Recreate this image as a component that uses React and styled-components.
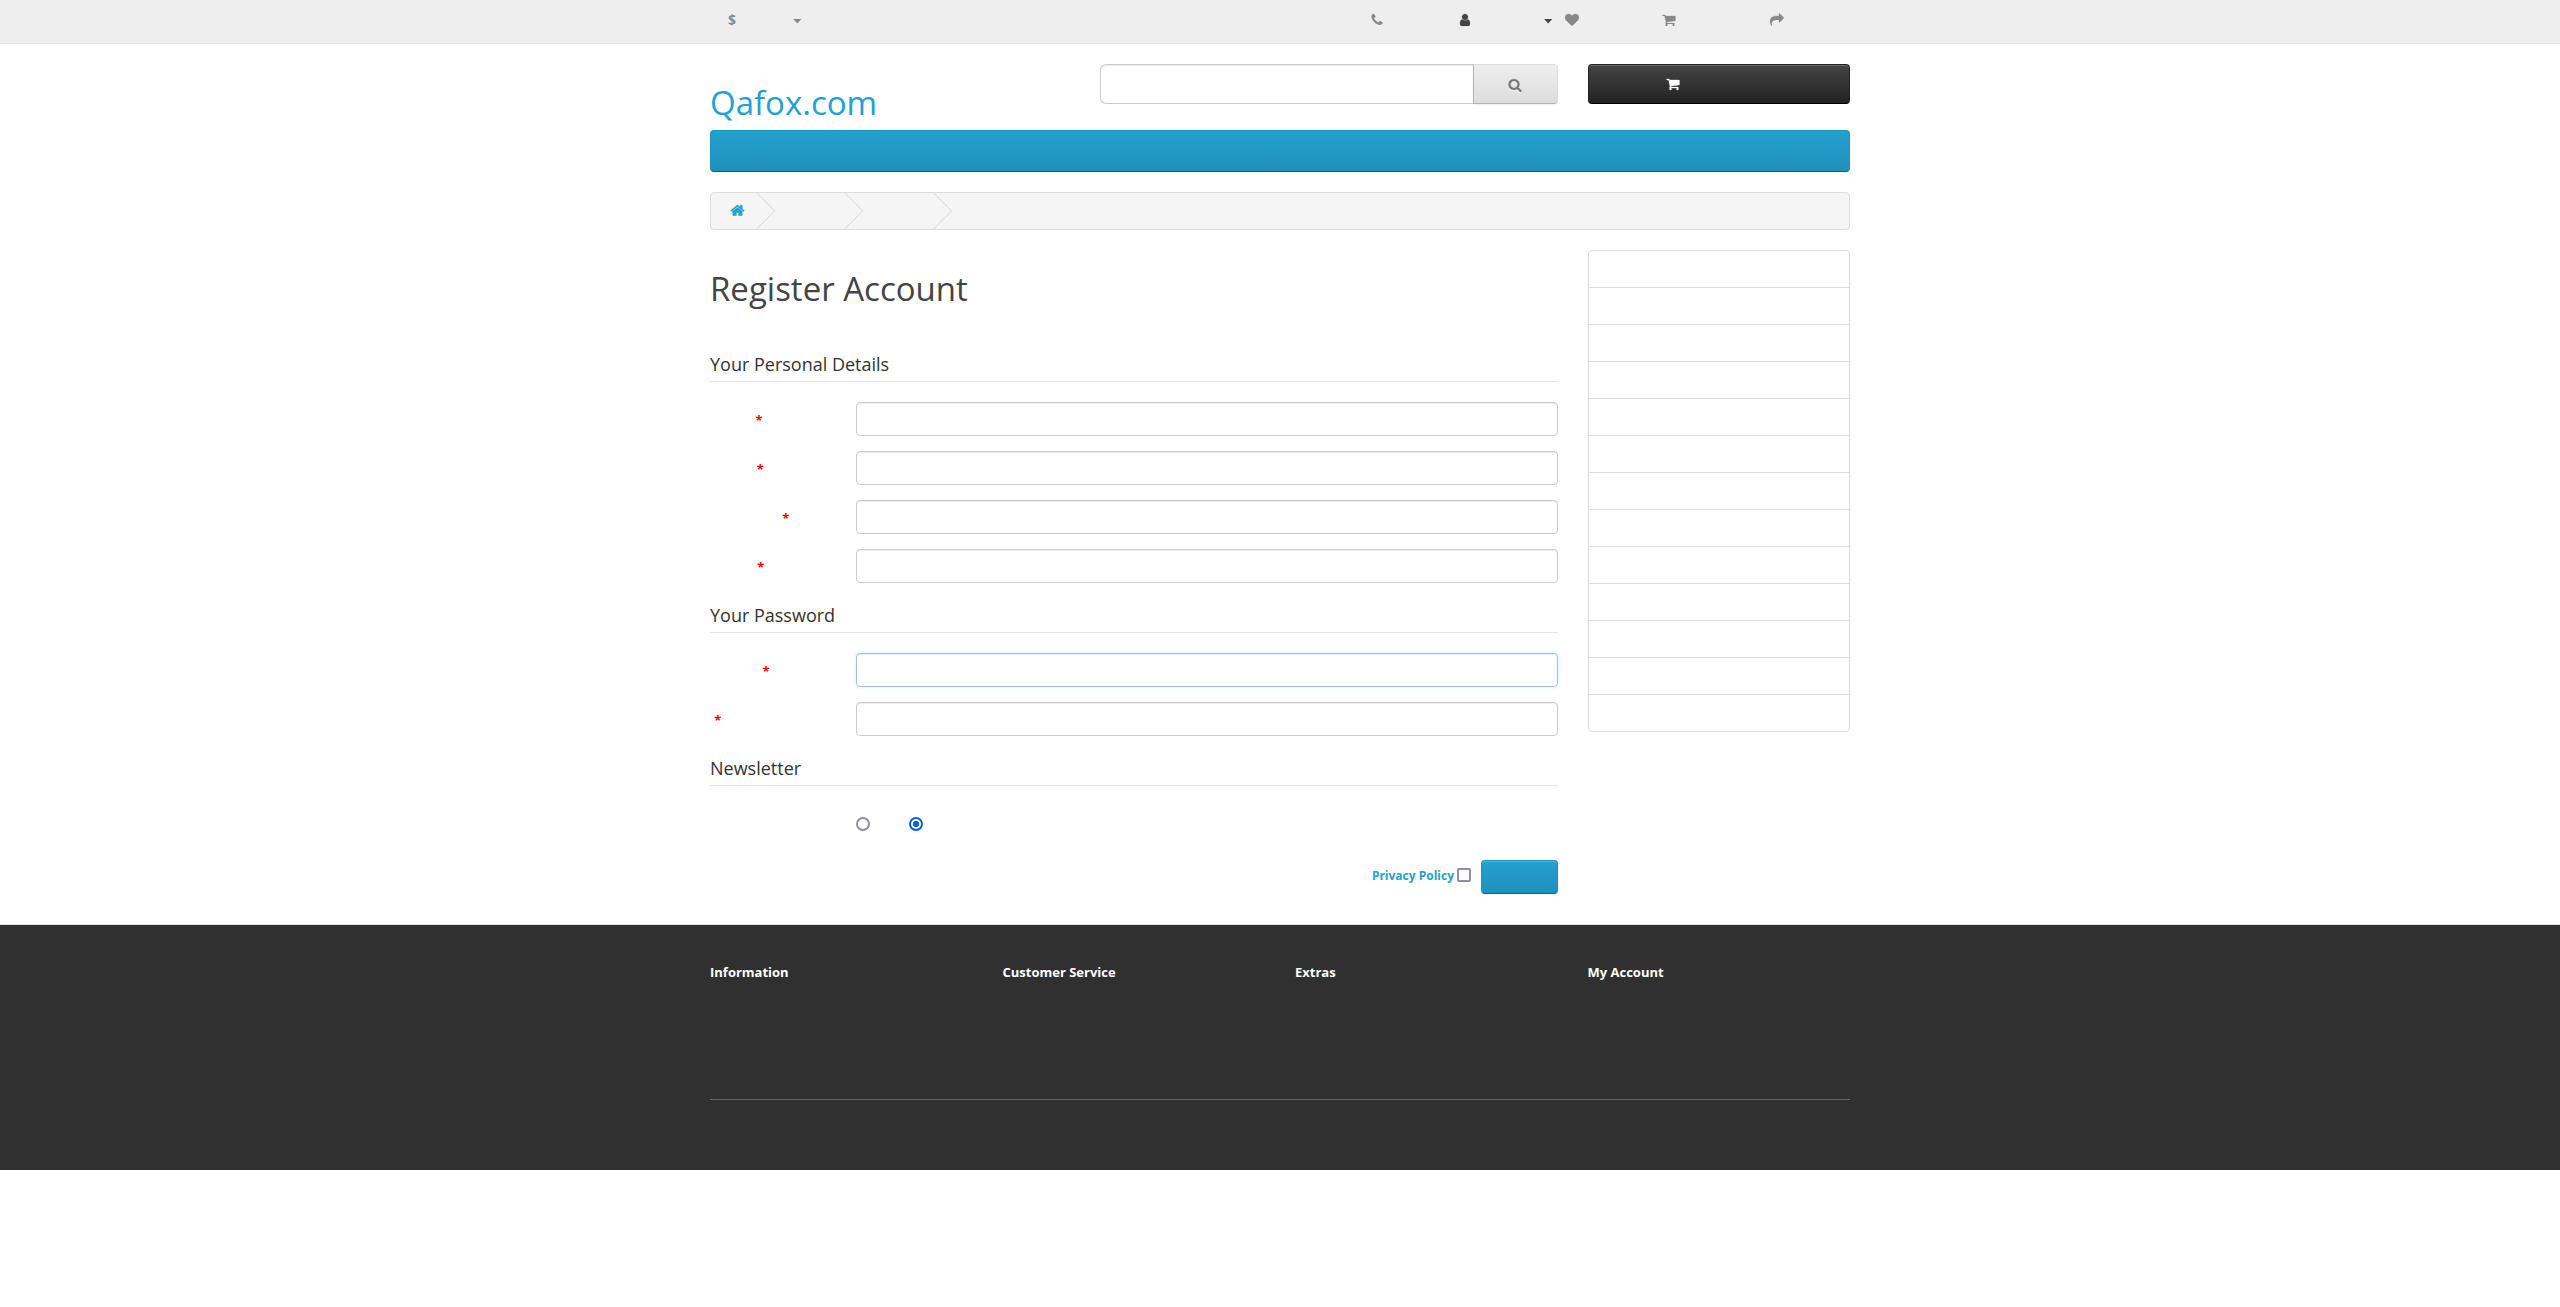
import React from 'react';
import styled, { createGlobalStyle } from 'styled-components';

const GlobalStyle = createGlobalStyle`
  *, *::before, *::after { box-sizing: border-box; }
  body {
    margin: 0;
    background: #fff;
    color: #666;
    font: 400 12px/20px "Open Sans", sans-serif;
  }
  h1, h5, ul { margin: 0; padding: 0; }
  ul { list-style: none; }
  a { text-decoration: none; }
`;

const ICONS = {
  phone: 'M1600 1240q0 27-10 70.5t-21 68.5q-21 50-122 106-94 51-186 51-27 0-53-3.5t-57.5-12.5-47-14.5-55.5-20.5-49-18q-98-35-175-83-127-79-264-216t-216-264q-48-77-83-175-3-9-18-49t-20.5-55.5-14.5-47-12.5-57.5-3.5-53q0-92 51-186 56-101 106-122 25-11 68.5-21t70.5-10q14 0 21 3 18 6 53 76 11 19 30 54t35 63.5 31 53.5q3 4 17.5 25t21.5 35.5 7 28.5q0 20-28.5 50t-62 55-62 53-28.5 46q0 9 5 22.5t8.5 20.5 14 24 11.5 19q76 137 174 235t235 174q2 1 19 11.5t24 14 20.5 8.5 22.5 5q18 0 46-28.5t53-62 55-62 50-28.5q14 0 28.5 7t35.5 21.5 25 17.5q25 15 53.5 31t63.5 35 54 30q70 35 76 53 3 7 3 21z',
  user: 'M1536 1399q0 109-62.5 187t-150.5 78h-854q-88 0-150.5-78t-62.5-187q0-85 8.5-160.5t31.5-152 58.5-131 94-89 134.5-34.5q131 128 313 128t313-128q76 0 134.5 34.5t94 89 58.5 131 31.5 152 8.5 160.5zm-256-887q0 159-112.5 271.5t-271.5 112.5-271.5-112.5-112.5-271.5 112.5-271.5 271.5-112.5 271.5 112.5 112.5 271.5z',
  heart: 'M896 1664q-26 0-44-18l-624-602q-10-8-27.5-26t-55.5-65.5-68-97.5-53.5-121-23.5-138q0-220 127-344t351-124q62 0 126.5 21.5t120 58 95.5 68.5 76 68q36-36 76-68t95.5-68.5 120-58 126.5-21.5q224 0 351 124t127 344q0 221-229 450l-623 600q-18 18-44 18z',
  cart: 'M704 1536q0 52-38 90t-90 38-90-38-38-90 38-90 90-38 90 38 38 90zm896 0q0 52-38 90t-90 38-90-38-38-90 38-90 90-38 90 38 38 90zm128-1088v512q0 24-16.5 42.5t-40.5 21.5l-1044 122q13 60 13 70 0 16-24 64h920q26 0 45 19t19 45-19 45-45 19h-1024q-26 0-45-19t-19-45q0-11 8-31.5t16-36 21.5-40 15.5-29.5l-177-823h-204q-26 0-45-19t-19-45 19-45 45-19h256q16 0 28.5 6.5t19.5 15.5 13 24.5 8 26 5.5 29.5 4.5 26h1201q26 0 45 19t19 45z',
  share: 'M1792 640q0 26-19 45l-512 512q-19 19-45 19t-45-19-19-45v-256h-224q-98 0-175.5 6t-154 21.5-133 42.5-105.5 69.5-80 101-48.5 138.5-17.5 181q0 55 5 123 0 6 2.5 23.5t2.5 26.5q0 15-8.5 25t-23.5 10q-16 0-28-17-7-9-13-22t-13.5-30-10.5-24q-127-285-127-451 0-199 53-333 162-403 875-403h224v-256q0-26 19-45t45-19 45 19l512 512q19 19 19 45z',
  home: 'M1472 992v480q0 26-19 45t-45 19h-384v-384h-256v384h-384q-26 0-45-19t-19-45v-480q0-1 .5-3t.5-3l575-474 575 474q1 2 1 6zm223-69l-62 74q-8 9-21 11h-3q-13 0-21-7l-692-577-692 577q-12 8-24 7-13-2-21-11l-62-74q-8-10-7-23.5t11-21.5l719-599q32-26 76-26t76 26l244 204v-195q0-14 9-23t23-9h192q14 0 23 9t9 23v408l219 182q10 8 11 21.5t-7 23.5z',
  search: 'M1216 832q0-185-131.5-316.5t-316.5-131.5-316.5 131.5-131.5 316.5 131.5 316.5 316.5 131.5 316.5-131.5 131.5-316.5zm512 832q0 52-38 90t-90 38q-54 0-90-38l-343-342q-179 124-399 124-143 0-273.5-55.5t-225-150-150-225-55.5-273.5 55.5-273.5 150-225 225-150 273.5-55.5 273.5 55.5 225 150 150 225 55.5 273.5q0 220-124 399l343 343q37 37 37 90z',
};

const Glyph = styled.svg`
  display: block;
  flex: none;
  width: ${(p) => p.$size}px;
  height: ${(p) => p.$size}px;
  overflow: visible;
  fill: currentColor;
  stroke: currentColor;
  stroke-width: 40;
  filter: ${(p) => (p.$shadow ? 'drop-shadow(0 1px 0 #fff)' : 'none')};
`;

const Icon = ({ name, size = 14, shadow = true }) => (
  <Glyph viewBox="0 0 1792 1792" $size={size} $shadow={shadow} aria-hidden="true">
    <path d={ICONS[name]} />
  </Glyph>
);

const Container = styled.div`
  width: 1140px;
  margin: 0 auto;
`;

const TopBar = styled.nav`
  height: 44px;
  background: #eee;
  border-bottom: 1px solid #e2e2e2;
`;

const TopRow = styled(Container)`
  display: flex;
  justify-content: space-between;
  padding: 13px 66px 0 18px;
`;

const Currency = styled.div`
  display: flex;
  gap: 57px;
  height: 14px;
  color: #888;
  text-shadow: 0 1px 0 #fff;
`;

const CurrencySign = styled.strong`
  width: 8px;
  font-size: 14px;
  line-height: 14px;
`;

const Caret = styled.span`
  width: 8.6px;
  height: 4.8px;
  margin-top: 5.8px;
  background: currentColor;
  clip-path: polygon(0 0, 100% 0, 50% 100%);
`;

const TopLinks = styled.ul`
  display: grid;
  grid-template-columns: 88.5px 106.5px 97px 108.5px 14px;
`;

const TopLink = styled.li`
  display: flex;
  justify-content: space-between;
  padding-right: 12px;
  height: 14px;
  color: ${(p) => (p.$active ? '#444' : '#888')};
`;

const Header = styled(Container)`
  display: grid;
  grid-template-columns: 360px 458px 262px;
  column-gap: 30px;
  align-items: start;
  height: 86px;
  padding-top: 20px;
`;

const Logo = styled.h1`
  padding-top: 21px;
  font-size: 33px;
  font-weight: 400;
  line-height: 36px;
  color: #23a1d1;
`;

const SearchBox = styled.div`
  display: flex;
  height: 40px;
`;

const Input = styled.input`
  display: block;
  flex: 1;
  min-width: 0;
  height: 34px;
  padding: 6px 12px;
  border: 1px solid ${(p) => (p.$active ? '#a4c1da' : '#ccc')};
  border-radius: 4px;
  outline: 0;
  background: #fff;
  color: #555;
  font: inherit;
  box-shadow: inset 0 1px 1px rgba(0, 0, 0, 0.075)
    ${(p) => (p.$active ? ', 0 0 4px rgba(102, 175, 233, 0.25)' : '')};
`;

const SearchInput = styled(Input)`
  height: 40px;
  border-right: 0;
  border-radius: 6px 0 0 6px;
`;

const ButtonBase = styled.button`
  display: flex;
  align-items: center;
  padding: 0;
  border: 1px solid;
  border-radius: 4px;
`;

const SearchButton = styled(ButtonBase)`
  width: 85px;
  padding: 2px 0 0 34px;
  border-color: #ddd #ddd #b3b3b3 #b3b3b3;
  border-radius: 0 4px 4px 0;
  background: linear-gradient(#eee, #ddd);
  color: #777;
  box-shadow: 0 1px 2px rgba(0, 0, 0, 0.06);
`;

const CartButton = styled(ButtonBase)`
  height: 40px;
  padding: 0 0 0 77px;
  border-color: #222 #222 #000;
  background: linear-gradient(#444, #222);
  color: #fff;
  box-shadow: inset 0 1px 0 rgba(255, 255, 255, 0.2);
`;

const Menu = styled(Container).attrs({ as: 'nav' })`
  height: 42px;
  border: 1px solid;
  border-color: #1f90bb #1f90bb #145e7a;
  border-radius: 4px;
  background: linear-gradient(#23a1d1, #1f90bb);
`;

const Breadcrumb = styled.ul`
  display: flex;
  width: 1140px;
  height: 38px;
  margin: 20px auto;
  border: 1px solid #ddd;
  border-radius: 4px;
  background: #f5f5f5;
  overflow: hidden;
`;

const Crumb = styled.li`
  position: relative;
  width: ${(p) => p.$width}px;
  padding: 10px 0 0 19.3px;
  color: #23a1d1;
  &::after {
    content: '';
    position: absolute;
    top: 5px;
    right: -5px;
    width: 26px;
    height: 26px;
    border-right: 1px solid #ddd;
    border-bottom: 1px solid #ddd;
    transform: rotate(-45deg);
  }
`;

const Main = styled(Container).attrs({ as: 'main' })`
  display: grid;
  grid-template-columns: 848px 262px;
  column-gap: 30px;
  align-items: start;
  height: 674px;
`;

const Content = styled.form`
  display: flex;
  flex-direction: column;
`;

const Title = styled.h1`
  margin: 21px 0 43px;
  font-size: 33px;
  font-weight: 400;
  line-height: 36px;
  color: #444;
`;

const Section = styled.section`
  display: flex;
  flex-direction: column;
  gap: 15px;
  margin-bottom: 18px;
`;

const Legend = styled.div`
  height: 32px;
  margin-bottom: 5px;
  border-bottom: 1px solid #e5e5e5;
  font-size: 18px;
  line-height: 29px;
  color: #333;
`;

const Field = styled.div`
  display: flex;
`;

const Label = styled.label`
  width: 146px;
  padding: 8px 0 0 ${(p) => p.$indent}px;
  color: #f00;
  font-size: 13px;
  font-weight: 700;
`;

const Radios = styled.div`
  display: flex;
  gap: 39px;
  padding: 11px 0 0 146px;
`;

const Radio = styled.input.attrs({ type: 'radio' })`
  appearance: none;
  width: 14px;
  height: 14px;
  margin: 0;
  border: 2px solid #8f8f9d;
  border-radius: 50%;
  background: #fff;
  &:checked {
    border-color: #0060df;
    background: radial-gradient(circle, #0060df 2.8px, #fff 3.4px);
  }
`;

const Checkbox = styled.input.attrs({ type: 'checkbox' })`
  appearance: none;
  width: 14px;
  height: 14px;
  margin: 8px 10px 0 3px;
  border: 2px solid #8f8f9d;
  border-radius: 2px;
  background: #fff;
`;

const Actions = styled.div`
  display: flex;
  justify-content: flex-end;
  align-items: flex-start;
  margin-top: 11px;
`;

const PolicyLink = styled.a`
  padding-top: 6px;
  font-weight: 700;
  color: #23a1d1;
`;

const SubmitButton = styled(ButtonBase)`
  width: 77px;
  height: 34px;
  border-color: #1f90bb #1f90bb #145e7a;
  background: linear-gradient(#23a1d1, #1f90bb);
  box-shadow: inset 0 1px 0 rgba(255, 255, 255, 0.2), 0 1px 2px rgba(0, 0, 0, 0.05);
`;

const SideList = styled.ul`
  border: 1px solid #ddd;
  border-radius: 4px;
`;

const SideItem = styled.li`
  height: 37px;
  border-bottom: 1px solid #ddd;
  &:last-child {
    height: 36px;
    border-bottom: 0;
  }
`;

const Footer = styled.footer`
  height: 246px;
  padding-top: 30px;
  border-top: 1px solid #ddd;
  background: #303030;
`;

const FooterColumns = styled(Container)`
  display: grid;
  grid-template-columns: repeat(4, 262.5px);
  column-gap: 30px;
  height: 145px;
  border-bottom: 1px solid #666;
`;

const FooterTitle = styled.h5`
  padding-top: 10px;
  font-size: 13px;
  font-weight: 700;
  line-height: 14px;
  color: #fff;
`;

const PERSONAL = [45.5, 46.7, 72.3, 47.3];
const PASSWORD = [52.5, 4.2];
const CRUMBS = [53.6, 88, 89];
const FOOTER = ['Information', 'Customer Service', 'Extras', 'My Account'];

const RequiredField = ({ indent, active }) => (
  <Field>
    <Label $indent={indent}>*</Label>
    <Input $active={active} />
  </Field>
);

export default function App() {
  return (
    <>
      <GlobalStyle />
      <TopBar>
        <TopRow>
          <Currency>
            <CurrencySign>$</CurrencySign>
            <Caret />
          </Currency>
          <TopLinks>
            <TopLink><Icon name="phone" /></TopLink>
            <TopLink $active><Icon name="user" /><Caret /></TopLink>
            <TopLink><Icon name="heart" /></TopLink>
            <TopLink><Icon name="cart" /></TopLink>
            <TopLink><Icon name="share" /></TopLink>
          </TopLinks>
        </TopRow>
      </TopBar>
      <Header as="header">
        <Logo>Qafox.com</Logo>
        <SearchBox>
          <SearchInput />
          <SearchButton type="button"><Icon name="search" /></SearchButton>
        </SearchBox>
        <CartButton type="button"><Icon name="cart" shadow={false} /></CartButton>
      </Header>
      <Menu />
      <Breadcrumb>
        {CRUMBS.map((width, i) => (
          <Crumb key={width} $width={width}>{i === 0 && <Icon name="home" size={15} />}</Crumb>
        ))}
      </Breadcrumb>
      <Main>
        <Content>
          <Title>Register Account</Title>
          <Section>
            <Legend>Your Personal Details</Legend>
            {PERSONAL.map((indent) => <RequiredField key={indent} indent={indent} />)}
          </Section>
          <Section>
            <Legend>Your Password</Legend>
            {PASSWORD.map((indent, i) => (
              <RequiredField key={indent} indent={indent} active={i === 0} />
            ))}
          </Section>
          <Section>
            <Legend>Newsletter</Legend>
            <Radios>
              <Radio name="newsletter" />
              <Radio name="newsletter" defaultChecked />
            </Radios>
          </Section>
          <Actions>
            <PolicyLink href="#">Privacy Policy</PolicyLink>
            <Checkbox />
            <SubmitButton type="button" />
          </Actions>
        </Content>
        <SideList>
          {Array.from({ length: 13 }, (_, i) => <SideItem key={i} />)}
        </SideList>
      </Main>
      <Footer>
        <FooterColumns>
          {FOOTER.map((title) => <FooterTitle key={title}>{title}</FooterTitle>)}
        </FooterColumns>
      </Footer>
    </>
  );
}
